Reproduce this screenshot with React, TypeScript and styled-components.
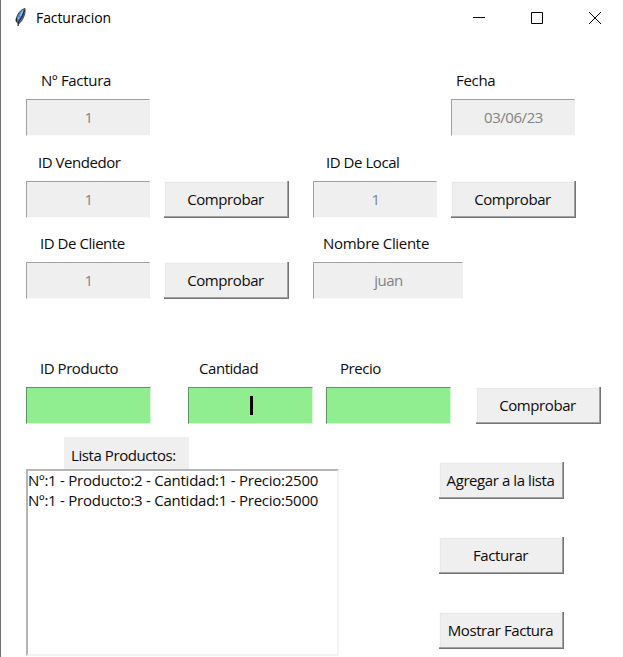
import React from "react";
import styled, { createGlobalStyle } from "styled-components";

const Global = createGlobalStyle`
  * { box-sizing: border-box; }
  html, body { margin: 0; background: #fff; overflow: hidden; }
  button { font: inherit; }
`;

const Window = styled.main`
  width: 623px;
  height: 657px;
  border-left: 1px solid #6f6f6f;
  background: #fff;
  color: #0c0c0c;
  font: 15px/20px "Open Sans", "Noto Sans", sans-serif;
  overflow: hidden;
`;

const TitleBar = styled.header`
  height: 36px;
  display: flex;
  align-items: center;
  padding-left: 12px;
`;

const Title = styled.h1`
  flex: 1;
  margin: 0 0 0 7px;
  color: #000;
  font-size: 14px;
  font-weight: 400;
  line-height: 20px;
  letter-spacing: -0.1px;
`;

const Controls = styled.div`
  display: flex;
  margin-right: -1px;
`;

const WindowButton = styled.span`
  width: 58px;
  height: 36px;
  display: flex;
  align-items: center;
  justify-content: center;
`;

const Row = styled.div<{ $top: number }>`
  display: flex;
  align-items: flex-end;
  margin-top: ${(p) => p.$top}px;
  padding-left: 25px;
`;

const Field = styled.div<{ $width?: number; $gap?: number }>`
  flex: none;
  width: ${(p) => p.$width ?? 124}px;
  margin-left: ${(p) => p.$gap ?? 0}px;
`;

const Label = styled.div<{ $indent: number; $spacing?: number }>`
  height: 29px;
  padding-left: ${(p) => p.$indent}px;
  letter-spacing: ${(p) => p.$spacing ?? -0.45}px;
  white-space: nowrap;
`;

const Value = styled.div<{ $active?: boolean }>`
  height: 37px;
  display: flex;
  align-items: center;
  justify-content: center;
  padding: 0 0 2px 1px;
  background: ${(p) => (p.$active ? "#90ee90" : "#efefef")};
  border-style: solid;
  border-width: 1px;
  border-color: ${(p) => (p.$active ? "#5f965f #d2fbd2 #d2fbd2 #5f965f" : "#a0a0a0 #efefef #fbfbfb #a0a0a0")};
  color: #838383;
  letter-spacing: -0.45px;
`;

const Caret = styled.span`
  width: 3px;
  height: 19px;
  margin-top: 1px;
  background: #000;
`;

const Button = styled.button<{ $gap?: number }>`
  flex: none;
  width: 125px;
  height: 37px;
  margin: 0 0 0 ${(p) => p.$gap ?? 0}px;
  padding: 0 2px 2px 0;
  border: 0;
  background: #efefef;
  color: inherit;
  letter-spacing: -0.42px;
  white-space: nowrap;
  box-shadow: inset -1px -1px #747474, inset -2px -2px #a3a3a3, inset 1px 1px #fbfbfb, inset 2px 2px #e8e8e8;
`;

const Bottom = styled.section`
  display: flex;
  margin-top: 13px;
  padding-left: 25px;
`;

const ListPanel = styled.div`
  width: 313px;
`;

const ListTitle = styled.div`
  width: 125px;
  height: 32px;
  margin-left: 38px;
  padding: 8px 0 0 7px;
  background: #efefef;
  letter-spacing: -0.42px;
  white-space: nowrap;
`;

const List = styled.ul`
  width: 313px;
  height: 187px;
  margin: 0;
  padding: 0;
  list-style: none;
  border: 2px solid;
  border-color: #b5b5b5 #f3f3f3 #f3f3f3 #b5b5b5;
`;

const Item = styled.li`
  height: 20px;
  line-height: 18px;
  letter-spacing: -0.25px;
  white-space: nowrap;
`;

const Actions = styled.div`
  display: flex;
  flex-direction: column;
  gap: 38px;
  margin: 25px 0 0 100px;
`;

const Feather = () => (
  <svg width="16" height="22" viewBox="0 0 16 22">
    <path d="M12 1.5C8 2.5 3.5 7 3 14l2.5 3C9.5 14 12.5 8 12 1.5Z" fill="#4682c4" stroke="#3c4248" />
    <path d="M10.5 3.5 7 9M5 12l1-2" fill="none" stroke="#8ebced" strokeWidth="1.5" />
    <path d="m11.5 3-2 6-4 6-.5 4M3.5 11v4" fill="none" stroke="#22272d" strokeWidth="1.2" />
  </svg>
);

export default function App() {
  return (
    <Window>
      <Global />
      <TitleBar>
        <Feather />
        <Title>Facturacion</Title>
        <Controls>
          <WindowButton><svg width="12" height="12"><path d="M0 5.5h12" stroke="#000" /></svg></WindowButton>
          <WindowButton><svg width="12" height="12"><path d="M.5.5h11v11H.5Z" fill="none" stroke="#000" /></svg></WindowButton>
          <WindowButton><svg width="12" height="12"><path d="m0 0 12 12M12 0 0 12" stroke="#000" /></svg></WindowButton>
        </Controls>
      </TitleBar>
      <Row $top={34}>
        <Field><Label $indent={15} $spacing={-0.3}>Nº Factura</Label><Value>1</Value></Field>
        <Field $gap={301}><Label $indent={5} $spacing={-0.3}>Fecha</Label><Value>03/06/23</Value></Field>
      </Row>
      <Row $top={16}>
        <Field><Label $indent={12}>ID Vendedor</Label><Value>1</Value></Field>
        <Button $gap={14}>Comprobar</Button>
        <Field $gap={24}><Label $indent={13}>ID De Local</Label><Value>1</Value></Field>
        <Button $gap={14}>Comprobar</Button>
      </Row>
      <Row $top={15}>
        <Field><Label $indent={14}>ID De Cliente</Label><Value>1</Value></Field>
        <Button $gap={14}>Comprobar</Button>
        <Field $gap={24} $width={150}><Label $indent={10} $spacing={-0.3}>Nombre Cliente</Label><Value>juan</Value></Field>
      </Row>
      <Row $top={59}>
        <Field $width={125}><Label $indent={14}>ID Producto</Label><Value $active /></Field>
        <Field $gap={37} $width={125}><Label $indent={11}>Cantidad</Label><Value $active><Caret /></Value></Field>
        <Field $gap={13} $width={125}><Label $indent={14}>Precio</Label><Value $active /></Field>
        <Button $gap={25}>Comprobar</Button>
      </Row>
      <Bottom>
        <ListPanel>
          <ListTitle>Lista Productos:</ListTitle>
          <List>
            <Item>Nº:1 - Producto:2 - Cantidad:1 - Precio:2500</Item>
            <Item>Nº:1 - Producto:3 - Cantidad:1 - Precio:5000</Item>
          </List>
        </ListPanel>
        <Actions>
          <Button>Agregar a la lista</Button>
          <Button>Facturar</Button>
          <Button>Mostrar Factura</Button>
        </Actions>
      </Bottom>
    </Window>
  );
}
